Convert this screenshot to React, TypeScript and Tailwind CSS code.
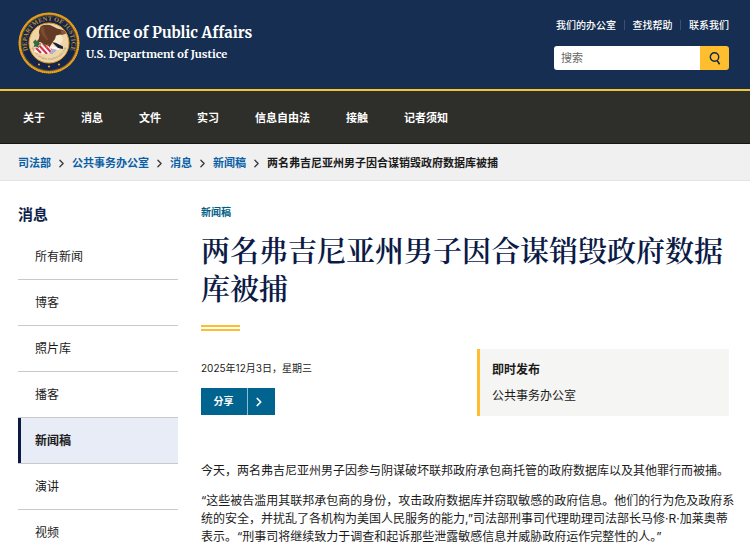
import React from 'react';
import { ChevronRight } from 'lucide-react';

const officeLinks = ['我们的办公室', '查找帮助', '联系我们'];

const navItems = ['关于', '消息', '文件', '实习', '信息自由法', '接触', '记者须知'];

const crumbs = ['司法部', '公共事务办公室', '消息', '新闻稿'];

const sideItems = ['所有新闻', '博客', '照片库', '播客', '新闻稿', '演讲', '视频'];

function Seal() {
  return (
    <svg viewBox="0 0 124 124" className="h-[62px] w-[62px] shrink-0" aria-hidden="true">
      <defs>
        <path id="seal-top" d="M 19.3 75 A 44.6 44.6 0 1 1 104.7 75" />
        <path id="seal-motto" d="M 26 60 A 36 36 0 0 0 98 60" />
        <clipPath id="seal-shield">
          <path d="M34 74 L48 64 L70 66 L78 76 L68 84 Q50 86 32 80 Z" />
        </clipPath>
      </defs>
      <circle cx="62" cy="62" r="61" fill="#c8891a" />
      <circle cx="62" cy="62" r="59" fill="none" stroke="#f0ac26" strokeWidth="3" strokeDasharray="2.5 1.5" />
      <circle cx="62" cy="62" r="56" fill="#14244a" />
      <circle cx="62" cy="62" r="55" fill="none" stroke="#7d6530" strokeWidth="1" />
      <circle cx="62" cy="62" r="40" fill="#efd5a5" stroke="#d99a22" strokeWidth="2" />
      <text fill="#b98d35" fontSize="13" fontWeight="700" fontFamily="Liberation Serif, serif">
        <textPath href="#seal-top" startOffset="50%" textAnchor="middle">
          DEPARTMENT OF JUSTICE
        </textPath>
      </text>
      <text fill="#7a6c58" fontSize="5" fontFamily="Liberation Serif, serif">
        <textPath href="#seal-motto" startOffset="50%" textAnchor="middle">
          QUI PRO DOMINA JUSTITIA SEQUITUR
        </textPath>
      </text>
      <g fill="#e0a12a">
        <circle cx="42" cy="105" r="2.2" />
        <circle cx="62" cy="109" r="2.2" />
        <circle cx="82" cy="105" r="2.2" />
      </g>
      {/* shield */}
      <g clipPath="url(#seal-shield)">
        <path d="M30 60h54v30h-54z" fill="#f8f2f0" />
        <path d="M32 68l14 14M40 64l18 20M49 62l20 22M58 62l16 18" stroke="#cf2f48" strokeWidth="4" />
        <path d="M62 84l8-12 12 4-10 12z" fill="#aab4cf" />
      </g>
      {/* olive branch and arrows */}
      <path d="M30 60l5-5 3 4 5-3-1 6 4 2-5 4 1 4-6-3-5 1 2-5z" fill="#2f6b45" />
      <path d="M72 48l14-2 4 9-6 10-14-6z" fill="#f7e9cb" />
      <path d="M64 68l20 4-2 4-18-3z" fill="#fffaf0" />
      <path d="M68 60l8 2 14 7 0 5-10-2z" fill="#16213f" />
      {/* eagle */}
      <path
        d="M46 28q8-4 18-2 8 3 14 7l12 3q5 2 6 7-4 3-12 2l-8 2q-1 8-6 12l-5 8q-5 2-9-1-6-1-11-6-5 1-7-2 5-4 5-12-3-8 3-18z"
        fill="#633a26"
      />
      <path d="M46 28q-3 12 4 20l7 8 4-1q-8-9-9-24z" fill="#7d4b30" />
      <path d="M86 37q6-1 9 4l-1 3-8-1z" fill="#8c5a3a" />
      <path d="M46 62l-6 6M60 65l-3 6" stroke="#c98d2e" strokeWidth="2" />
    </svg>
  );
}

function SearchIcon() {
  return (
    <svg viewBox="0 0 12 13" className="h-[13px] w-3" fill="none" stroke="#12264d" aria-hidden="true">
      <circle cx="5.5" cy="5" r="4.2" strokeWidth="1.4" />
      <path d="M8 8.4l2.6 3.8" strokeWidth="1.6" />
    </svg>
  );
}

export default function App() {
  return (
    <div className="min-h-screen bg-white font-['Inter','Noto_Sans_CJK_SC',sans-serif] text-xs text-[#1b1b1b]">
      <header className="border-b-2 border-[#f5c431] bg-[#162e51]">
        <div className="flex h-[89px] items-start justify-between pl-[18px] pr-[21px]">
          <a href="#home" className="flex items-start gap-[6px] pt-3 text-white">
            <Seal />
            <span className="flex flex-col pt-[10px] font-['Merriweather','DejaVu_Serif_Condensed','Liberation_Serif',serif] font-bold">
              <span className="text-[15px] leading-[22px]">Office of Public Affairs</span>
              <span className="text-[11px] leading-5">U.S. Department of Justice</span>
            </span>
          </a>
          <div className="flex w-[173px] flex-col pt-[18px] sm:w-[175px]">
            <ul className="flex items-center justify-between pl-[2px] text-[10px] leading-[14px] font-medium text-white">
              {officeLinks.map((link, i) => (
                <React.Fragment key={link}>
                  {i > 0 && <li className="h-[10px] w-px bg-[#3b5072]" aria-hidden="true" />}
                  <li>
                    <a href="#office">{link}</a>
                  </li>
                </React.Fragment>
              ))}
            </ul>
            <form className="mt-[14px] flex h-6 overflow-hidden rounded-[3px]">
              <input
                type="search"
                aria-label="搜索"
                placeholder="搜索"
                className="min-w-0 flex-1 bg-white px-[7px] text-[11px] outline-none placeholder:text-[#666666]"
              />
              <button type="submit" aria-label="搜索" className="flex w-[29px] items-center justify-center bg-[#ffbe2e]">
                <SearchIcon />
              </button>
            </form>
          </div>
        </div>
      </header>

      <nav className="border-b border-[#151512] bg-[#2e2e2a]">
        <ul className="flex h-[52px] items-center gap-9 pl-[23px] pt-[2px] text-[11px] font-bold text-white">
          {navItems.map((item) => (
            <li key={item}>
              <a href="#nav">{item}</a>
            </li>
          ))}
        </ul>
      </nav>

      <nav aria-label="breadcrumb" className="border-b border-[#e4e4e4] bg-[#f0f0f0]">
        <ol className="flex h-9 items-center pl-[18px] pt-[2px] text-[11px] font-bold">
          {crumbs.map((crumb) => (
            <li key={crumb} className="flex items-center">
              <a href="#crumb" className="text-[#0b5fa5]">
                {crumb}
              </a>
              <ChevronRight className="mx-1 h-[13px] w-[13px] text-[#3d3d3d]" strokeWidth={2.5} />
            </li>
          ))}
          <li>两名弗吉尼亚州男子因合谋销毁政府数据库被捕</li>
        </ol>
      </nav>

      <div className="flex pl-[18px] pr-[21px]">
        <aside className="w-40 shrink-0 pt-6">
          <h2 className="text-[15px] leading-5 font-bold text-[#0f1f4b]">消息</h2>
          <ul className="mt-[9px]">
            {sideItems.map((item) => (
              <li key={item} className="border-b border-[#c9c9c9] last:border-b-0">
                {item === '新闻稿' ? (
                  <a
                    href="#side"
                    className="flex h-[45px] items-center border-l-[3px] border-[#0a1a45] bg-[#e8ecf6] pl-[14px] font-bold"
                  >
                    {item}
                  </a>
                ) : (
                  <a href="#side" className="flex h-[45px] items-center pl-[17px]">
                    {item}
                  </a>
                )}
              </li>
            ))}
          </ul>
        </aside>

        <main className="ml-[23px] min-w-0 flex-1 pt-6">
          <p className="text-[10px] leading-[14px] font-bold text-[#005e85]">新闻稿</p>
          <h1 className="mt-3 font-['Noto_Serif_CJK_SC','Noto_Serif_SC','Noto_Sans_CJK_SC',serif] text-[29px] leading-[38px] font-semibold text-[#0b1b46]">
            两名弗吉尼亚州男子因合谋销毁政府数据库被捕
          </h1>
          <div className="mt-[18px] h-[6px] w-[39px] border-y-2 border-[#ffbe2e]" />

          <div className="mt-[18px] flex justify-between">
            <div className="pt-[11px]">
              <p className="text-[10px] leading-4">2025年12月3日，星期三</p>
              <button type="button" className="mt-3 flex h-[27px] items-stretch bg-[#00648f] text-[10px] font-bold text-white">
                <span className="flex w-[46px] items-center justify-center pr-px">分享</span>
                <span className="flex w-7 items-center border-l border-[#8fbdd1] pl-1">
                  <ChevronRight className="h-[14px] w-[14px]" strokeWidth={3} />
                </span>
              </button>
            </div>
            <section className="w-[252px] border-l-[3px] border-[#ffbe2e] bg-[#f5f5f3] px-3 py-2">
              <h3 className="leading-[26px] font-bold">即时发布</h3>
              <p className="leading-[25px]">公共事务办公室</p>
            </section>
          </div>

          <div className="-mr-2 mt-[46px] space-y-3 leading-[18px]">
            <p>今天，两名弗吉尼亚州男子因参与阴谋破坏联邦政府承包商托管的政府数据库以及其他罪行而被捕。</p>
            <p>
              “这些被告滥用其联邦承包商的身份，攻击政府数据库并窃取敏感的政府信息。他们的行为危及政府系统的安全，并扰乱了各机构为美国人民服务的能力,”司法部刑事司代理助理司法部长马修·R·加莱奥蒂表示。“刑事司将继续致力于调查和起诉那些泄露敏感信息并威胁政府运作完整性的人。”
            </p>
          </div>
        </main>
      </div>
    </div>
  );
}
